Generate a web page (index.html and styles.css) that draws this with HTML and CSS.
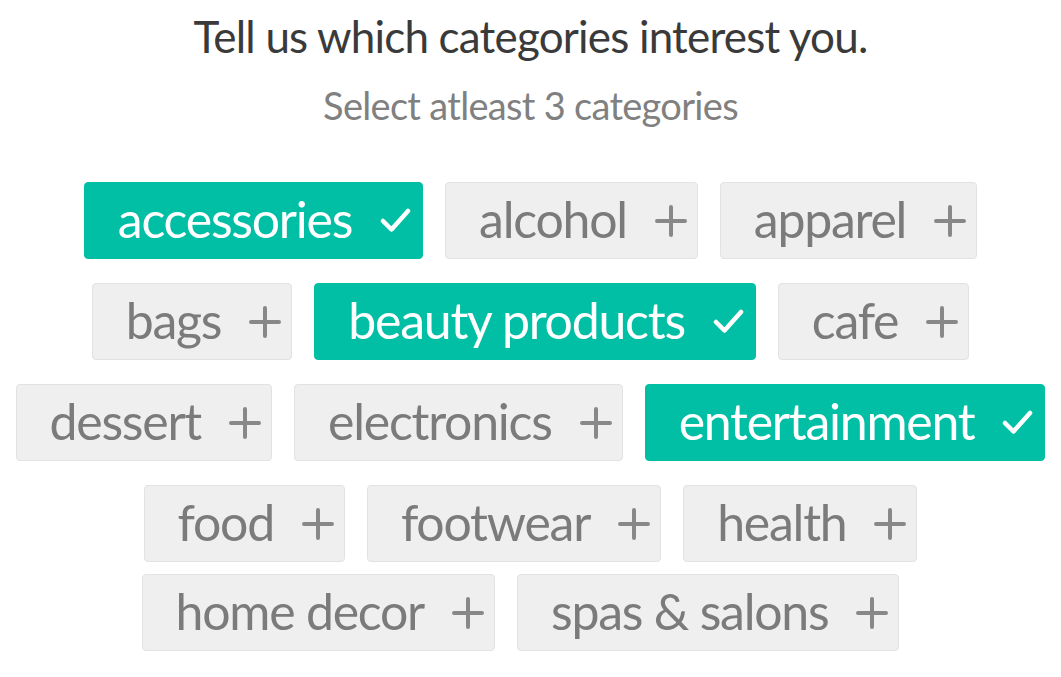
FILE: index.html
```html
<!DOCTYPE html>
<html lang="en">
<head>
  <meta charset="UTF-8">
  <meta name="viewport" content="width=device-width, initial-scale=1.0">
  <title>Choose categories</title>
  <link rel="stylesheet" href="styles.css">
</head>
<body>
  <div class="picker">
    <h1>Tell us which categories interest you.</h1>
    <p class="hint">Select atleast 3 categories</p>

    <div class="chips">
      <div class="row">
        <button class="chip selected">accessories <span class="icon"></span></button>
        <button class="chip">alcohol <span class="icon"></span></button>
        <button class="chip">apparel <span class="icon"></span></button>
      </div>
      <div class="row">
        <button class="chip">bags <span class="icon"></span></button>
        <button class="chip selected">beauty products <span class="icon"></span></button>
        <button class="chip">cafe <span class="icon"></span></button>
      </div>
      <div class="row">
        <button class="chip">dessert <span class="icon"></span></button>
        <button class="chip">electronics <span class="icon"></span></button>
        <button class="chip selected">entertainment <span class="icon"></span></button>
      </div>
      <div class="row">
        <button class="chip">food <span class="icon"></span></button>
        <button class="chip">footwear <span class="icon"></span></button>
        <button class="chip">health <span class="icon"></span></button>
      </div>
      <div class="row last">
        <button class="chip">home decor <span class="icon"></span></button>
        <button class="chip">spas &amp; salons <span class="icon"></span></button>
      </div>
    </div>
  </div>

  <script>
    const plusIcon = '<svg viewBox="0 0 32 32" width="32" height="32"><path d="M2 16H30M16 2V30" stroke="#888" stroke-width="4" stroke-linecap="round" fill="none"/></svg>';
    const checkIcon = '<svg viewBox="0 0 32 32" width="32" height="32"><path d="M3 16L11.5 24.5L28 6" stroke="#fff" stroke-width="4.5" stroke-linecap="round" stroke-linejoin="round" fill="none"/></svg>';

    function drawIcon(chip) {
      const icon = chip.querySelector('.icon');
      icon.innerHTML = chip.classList.contains('selected') ? checkIcon : plusIcon;
    }

    document.querySelectorAll('.chip').forEach(function (chip) {
      drawIcon(chip);
      chip.addEventListener('click', function () {
        chip.classList.toggle('selected');
        drawIcon(chip);
      });
    });
  </script>
</body>
</html>
```

FILE: styles.css
```css
body {
  font-family: Lato, "Open Sans", sans-serif;
  margin: 0;
  padding: 0;
  background-color: #ffffff;
}
.picker {
  text-align: center;
}
.picker h1 {
  margin: 10px 0 0;
  font-size: 44px;
  font-weight: normal;
  letter-spacing: -0.8px;
  color: #3a3a3a;
  line-height: 52px;
}
.hint {
  margin: 20px 0 0;
  font-size: 38px;
  letter-spacing: -0.7px;
  color: #808080;
  line-height: 46px;
}
.chips {
  margin-top: 54px;
}
.row {
  display: flex;
  justify-content: center;
  gap: 22px;
  margin-bottom: 24px;
}
.row.last {
  margin-top: -12px;
  padding-right: 20px;
}
.chip {
  display: flex;
  align-items: center;
  height: 77px;
  padding: 0 10px 3px 33px;
  font-family: inherit;
  font-size: 50px;
  letter-spacing: -1.25px;
  color: #7b7b7b;
  background-color: #efefef;
  border: 1px solid #e2e2e2;
  border-radius: 4px;
  cursor: pointer;
}
.chip.selected {
  color: #ffffff;
  background-color: #00bfa5;
  border-color: #00bfa5;
}
.icon {
  display: flex;
  width: 32px;
  height: 32px;
  margin-left: 28px;
  margin-top: 3px;
}
```
